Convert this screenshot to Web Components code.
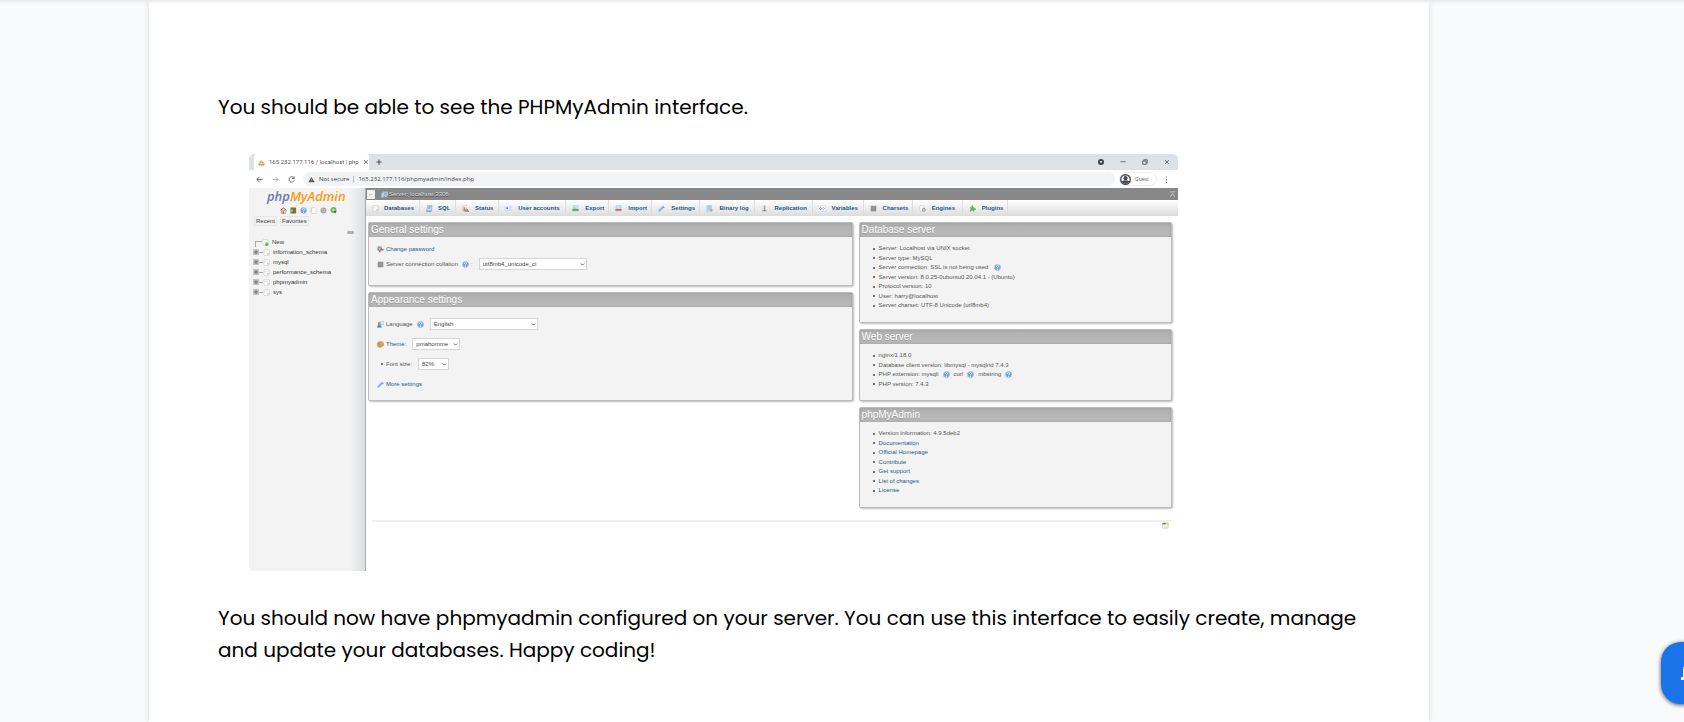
<!DOCTYPE html>
<html lang="en">
<head>
<meta charset="utf-8">
<title>Install phpMyAdmin</title>
<style>
body{margin:0;background:#f8fafc;color:#000;font-family:Poppins,Inter,sans-serif;overflow-x:hidden}
</style>
</head>
<body>
<article-page></article-page>
<notify-button></notify-button>
<script>
const define = (name, html) => {
  const t = document.createElement('template');
  t.innerHTML = html;
  customElements.define(name, class extends HTMLElement {
    constructor() {
      super();
      this.attachShadow({mode: 'open'}).append(t.content.cloneNode(true));
    }
  });
};

/* Icons on a 16-unit grid */
const ICONS = {
  home: '<path d="M1 8 8 2l7 6" fill="none" stroke="#a33b26" stroke-width="2"/><path d="M3 8h10v7H3z" fill="#e9dcae" stroke="#8a7a50"/><path d="M6 10h3v5H6z" fill="#7c5a2a"/>',
  exit: '<path d="M1 1h9v14H1z" fill="#4c9440"/><path d="M6 2l8-1v14l-8-1z" fill="#9b6230"/><path d="M3 6h3v4H3z" fill="#ddd"/>',
  help: '<circle cx="8" cy="8" r="7" fill="#6f9fd8" stroke="#a9c7e8" stroke-width="2"/><path d="M5.500 6.500q0-3 2.500-3t2.500 2.300q0 1.500-2.500 2.800v1.500M8 11.500v2" fill="none" stroke="#fff" stroke-width="1.800"/>',
  doc: '<path d="M4 1h8l2 2v12H4z" fill="#fff" stroke="#bbb"/><path d="M1 3h3M1 7h3M1 11h3" stroke="#999"/>',
  gear: '<circle cx="8" cy="8" r="5" fill="#d5d5d5" stroke="#aaa" stroke-width="4"/><circle cx="8" cy="8" r="2" fill="#999"/>',
  reload: '<circle cx="8" cy="7" r="5" fill="#bce5ae" stroke="#6fb562" stroke-width="4"/><path d="M8 9h7l-3 6z" fill="#317d2d"/>',
  db: '<path d="M2 3c0-3 13-3 13 0v10c0 3-13 3-13 0z" fill="#fafafa" stroke="#b8b8b8"/><path d="M2 4c0 2 13 2 13 0" fill="none" stroke="#ccc"/><path d="M9 9h5v4H9z" fill="#d5d5d5"/>',
  newdb: '<path d="M2 3c0-3 12-3 12 0v10c0 3-12 3-12 0z" fill="#fafafa" stroke="#b8b8b8"/><path d="M11 8v8M7 12h8" stroke="#6cae58" stroke-width="4"/>',
  sql: '<path d="M4 1h10l-2 14H1z" fill="#cfe2f7" stroke="#5b8dcc"/><path d="M6 4h5M5 7h5M1 14h11" stroke="#5b8dcc" stroke-width="2"/>',
  status: '<path d="M1 1h9v12H1z" fill="#eee" stroke="#bbb"/><path d="M5 14V5M9 14V8" stroke="#b87878" stroke-width="3"/><path d="M7 14h9M12 14V9" stroke="#888" stroke-width="3"/>',
  users: '<path d="M1 3h14v9H1z" fill="#eef3fa" stroke="#b8c6d8"/><path d="M3 5h4v4H3z" fill="#6487b7"/><path d="M9 6h4M9 9h4" stroke="#9ab"/>',
  export: '<path d="M2 1h12v13H2z" fill="#d5e4f2" stroke="#afc0d0"/><path d="M1 9h14v4H1z" fill="#5f9a58"/><path d="M3 7h8" stroke="#8fbf87" stroke-width="2"/>',
  import: '<path d="M2 1h12v13H2z" fill="#c9dcf2" stroke="#afc0d0"/><path d="M1 9h14v4H1z" fill="#e2606b"/>',
  wrench: '<path d="M3 13 10 6" stroke="#93b6e9" stroke-width="5" stroke-linecap="round"/><path d="m9 7 2-2V1l3 3 2 2-4 1-2 2z" fill="#8f9db8"/>',
  log: '<path d="M2 1h11v13H2z" fill="#cbdff1" stroke="#a6b5c7"/><path d="M4 4h7M4 7h7M4 10h7" stroke="#8399b2"/><circle cx="12" cy="12" r="3" fill="#aaa"/>',
  repl: '<path d="M6 1h4v9H6z" fill="#aaa"/><path d="M3 13h10" stroke="#999" stroke-width="3"/><path d="M8 10v4" stroke="#777" stroke-width="2"/>',
  vars: '<path d="M4 1h8l3 3v11H4z" fill="#fff" stroke="#ccc"/><path d="M4 5 1 8l3 3M9 5l3 3-3 3" fill="none" stroke="#4c90e0" stroke-width="2"/><circle cx="6.500" cy="8" r="1.500" fill="#4c90e0"/>',
  chars: '<path d="M2 2h12v12H2z" fill="#888" stroke="#aaa"/><path d="M4 5h8M4 8h8M4 11h8" stroke="#aaa"/>',
  engine: '<path d="M1 3c0-3 11-3 11 0v9c0 3-11 3-11 0z" fill="#f5f5f5" stroke="#bbb"/><circle cx="11" cy="11" r="3.500" fill="#ccc" stroke="#999" stroke-width="2"/>',
  plugin: '<path d="M2 5h4q-2-4 1.500-4T9 5h3v3q4-2 4 1t-4 2v4H9q0-3-2-3t-2 3H2v-4q2 0 2-2T2 8z" fill="#5fb75a"/>',
  key: '<circle cx="6" cy="6" r="4" fill="#ccc" stroke="#8d8496" stroke-width="3"/><path d="M5 10v5h3v-4z" fill="#777"/><path d="M8 7h7v3H8z" fill="#c9645a"/>',
  lang: '<path d="M7 1h9v7H9L7 11z" fill="#dfedfb" stroke="#6da1d7"/><circle cx="5" cy="6" r="3" fill="#b17b45"/><path d="M0 15q0-6 5-6t6 6z" fill="#3a79c4"/>',
  theme: '<path d="M8 1c10 0 9 11 4 11-3 0-1 3-4 3C-3 15-2 1 8 1z" fill="#dc9b5e" stroke="#b8804d"/><circle cx="5" cy="6" r="2" fill="#e07050"/><circle cx="11" cy="5" r="2" fill="#c9b3a0"/><circle cx="5" cy="11" r="1.500" fill="#a0a060"/>',
  win: '<path d="M1 2h13v12H1z" fill="#f4f4ec" stroke="#aaa"/><path d="M1 2h8v3H1z" fill="#4f739f"/><path d="M10 1h5v5h-5z" fill="#f1e438"/>',
  server: '<path d="M5 2h10v8H5z" fill="#87b7e8" stroke="#dce8f4"/><path d="M1 4h5v11H1z" fill="#c7d2dc"/><path d="M8 13h6" stroke="#c7d2dc" stroke-width="2"/>',
  boat: '<path d="M2 9 8 1v8zM9 9V4l5 5z" fill="#f59c32"/><path d="M0 10h16l-2 5H2z" fill="#e0945a"/>',
  close: '<path d="m3 3 10 10M13 3 3 13" stroke="#444" stroke-width="2"/>',
  plus: '<path d="M8 1v14M1 8h14" stroke="#555" stroke-width="3"/>',
  back: '<path d="M15 8H2M8 2 2 8l6 6" fill="none" stroke="#555" stroke-width="2"/>',
  fwd: '<path d="M1 8h13M8 2l6 6-6 6" fill="none" stroke="#aaa" stroke-width="2"/>',
  refresh: '<path d="M13 4a6 6 0 1 0 1 6M14 1v5H9" fill="none" stroke="#555" stroke-width="2"/>',
  warn: '<path d="M8 2 15 14H1z" fill="#555"/><path d="M8 6v4M8 11v2" stroke="#ddd" stroke-width="1"/>',
  drop: '<circle cx="8" cy="8" r="8" fill="#3c4043"/><path d="M4 6h8l-4 5z" fill="#fff"/>',
  min: '<path d="M1 7h14" stroke="#555" stroke-width="2"/>',
  max: '<path d="M2 5h9v9H2zM5 4V2h9v9h-2" fill="none" stroke="#444" stroke-width="2"/>',
  user: '<circle cx="8" cy="8" r="7" fill="#fff" stroke="#484b50" stroke-width="2"/><circle cx="8" cy="6" r="3" fill="#484b50"/><path d="M2 11q6-4 12 0-6 7-12 0z" fill="#484b50"/>',
  dots: '<path d="M7 1h2v3H7zM7 7h2v3H7zM7 13h2v3H7z" fill="#666"/>',
  up: '<path d="M2 2h12M3 13l5-7 5 7" fill="none" stroke="#ccc" stroke-width="2"/>',
  chevron: '<path d="m3 5 5 5 5-5" fill="none" stroke="#555" stroke-width="3"/>',
  expand: '<path d="M1 1h14v14H1z" fill="#bbb" stroke="#aaa"/><path d="M8 3v10M3 8h10" stroke="#777" stroke-width="3"/>',
  link: '<path d="M1 5h14v6H1z" fill="#999"/><path d="M4 8h8" stroke="#ddd" stroke-width="1"/>'
};
customElements.define('ui-icon', class extends HTMLElement {
  constructor() {
    super();
    this.attachShadow({mode: 'open'});
  }
  connectedCallback() {
    this.shadowRoot.innerHTML = `<style>:host{display:inline-block;flex:none;width:var(--icon,7px);height:var(--icon,7px)}svg{display:block;width:100%;height:100%}</style><svg viewBox="0 0 16 16" aria-hidden="true">${ICONS[this.getAttribute('name')]}</svg>`;
  }
});

/* Labelled drop-down: label, optional help icon, select */
customElements.define('pma-field', class extends HTMLElement {
  constructor() {
    super();
    this.attachShadow({mode: 'open'});
  }
  connectedCallback() {
    const a = n => this.getAttribute(n) || '';
    this.shadowRoot.innerHTML = `<style>
      :host{display:flex;align-items:center;height:12px}
      label{display:flex;align-items:center;gap:2px;color:var(--label,#555)}
      .box{display:grid;align-items:center;margin-left:6px;width:var(--w)}
      .box>*{grid-area:1/1}
      select{appearance:none;box-sizing:border-box;width:100%;height:12px;margin:0;padding:0 3px;border:1px solid #d5d5d5;border-radius:0;background:#fff;color:#444;font:inherit;line-height:10px}
      ui-icon{margin-left:2px}
      ui-icon[name=chevron]{--icon:5px;justify-self:end;margin-right:2px;pointer-events:none}
      </style>
      <label for="s"><slot></slot>${a('label')}${this.hasAttribute('help') ? '<ui-icon name="help"></ui-icon>' : ''}${a('after')}</label>
      <span class="box"><select id="s"><option>${a('value')}</option></select><ui-icon name="chevron"></ui-icon></span>`;
  }
});

define('pma-panel', `<style>
  :host{display:block;background:#f3f3f3;border:1px solid #bbb;border-radius:2px;box-shadow:1px 1px 2px #bbb}
  h2{margin:0;padding:0 2px;height:14px;line-height:14px;font-size:10px;font-weight:400;color:#fff;text-shadow:0 1px 0 #999;background:linear-gradient(#b0b0b0,#bbb);box-shadow:inset 0 0 3px #999}
  </style><h2><slot name="title"></slot></h2><slot></slot>`);

define('browser-bar', `<style>
  :host{display:block;background:#fff;color:#555;font:6px/12px "Open Sans",sans-serif}
  .strip{display:flex;align-items:center;height:16px;background:#dee1e6;padding-right:8px}
  .tab{display:flex;align-items:center;gap:4px;box-sizing:border-box;width:115px;height:16px;margin-left:5px;padding:0 4px;background:#fff;border-radius:3px 3px 0 0;font-family:Roboto,sans-serif}
  .tab span{flex:1;white-space:nowrap}
  button{display:flex;padding:0;border:0;background:none}
  .strip>button{--icon:6px}
  .new{margin:0 auto 0 7px}
  .win{margin-left:16px}
  .bar{display:flex;align-items:center;gap:9px;height:18px;padding:0 8px 0 7px}
  .url{display:flex;flex:1;align-items:center;gap:4px;height:14px;padding:0 5px;margin-left:-1px;border-radius:7px;background:#f1f3f4;color:#444}
  .url i{width:1px;height:7px;background:#bbb}
  .guest{display:flex;align-items:center;gap:4px;box-sizing:border-box;width:38px;height:14px;margin:0 -3px 0 -5px;border:1px solid #eee;border-radius:7px;font:5px "Open Sans",sans-serif;color:#555;--icon:11px}
  .close{--icon:6px}
  </style>
  <div class="strip"><div class="tab"><ui-icon name="boat"></ui-icon><span>165.232.177.116 / localhost | php</span><button class="close" aria-label="Close tab"><ui-icon name="close"></ui-icon></button></div>
  <button class="new" aria-label="New tab"><ui-icon name="plus"></ui-icon></button>
  <button class="win" aria-label="Search tabs"><ui-icon name="drop"></ui-icon></button><button class="win" aria-label="Minimize"><ui-icon name="min"></ui-icon></button><button class="win" aria-label="Maximize"><ui-icon name="max"></ui-icon></button><button class="win" aria-label="Close"><ui-icon name="close"></ui-icon></button></div>
  <div class="bar"><button aria-label="Back"><ui-icon name="back"></ui-icon></button><button aria-label="Forward"><ui-icon name="fwd"></ui-icon></button><button aria-label="Reload"><ui-icon name="refresh"></ui-icon></button>
  <div class="url"><ui-icon name="warn"></ui-icon><span>Not secure</span><i></i><span>165.232.177.116/phpmyadmin/index.php</span></div>
  <button class="guest"><ui-icon name="user"></ui-icon>Guest</button><button aria-label="Menu"><ui-icon name="dots"></ui-icon></button></div>`);

define('pma-nav', `<style>
  :host{display:block;box-sizing:border-box;background:linear-gradient(90deg,#f3f3f3 87%,#dcdfe1);border-right:1px solid #aaa;color:#333}
  .logo{margin:0 0 0 18px;font:italic 600 13px/16px "Open Sans",sans-serif;color:#f89c0e}
  .logo b{font-weight:600;color:#6c78af}
  .icons{display:flex;gap:3px;margin:3px 0 0 31px}
  .quick{display:flex;gap:3px;margin:2px 0 0 5px}
  button{padding:0 1px;border:1px solid #e6e6e6;border-radius:1px;background:#f2f2f2;color:#444;font:inherit;line-height:8px}
  .link{display:flex;justify-content:end;padding:3px 11px 0 0}
  ul{list-style:none;margin:1px 0 0;padding:0 0 0 4px}
  li{display:flex;align-items:center;height:10px;gap:3px}
  li ui-icon[name=expand]{--icon:6px}
  li i{width:4px;height:1px;margin:0 -3px;background:#aaa}
  .first i{width:6px;height:5px;align-self:end;margin:0 -3px 0 2px;border:solid #aaa;border-width:1px 0 0 1px;background:none}
  a{color:inherit;text-decoration:none}
  </style>
  <p class="logo"><b>php</b>MyAdmin</p>
  <div class="icons"><ui-icon name="home"></ui-icon><ui-icon name="exit"></ui-icon><ui-icon name="help"></ui-icon><ui-icon name="doc"></ui-icon><ui-icon name="gear"></ui-icon><ui-icon name="reload"></ui-icon></div>
  <div class="quick"><button>Recent</button><button>Favorites</button></div>
  <div class="link"><ui-icon name="link"></ui-icon></div>
  <ul><li class="first"><i></i><ui-icon name="newdb"></ui-icon><a href="#">New</a></li>
  ${['information_schema','mysql','performance_schema','phpmyadmin','sys'].map(n => `<li><ui-icon name="expand"></ui-icon><i></i><ui-icon name="db"></ui-icon><a href="#">${n}</a></li>`).join('')}</ul>`);

define('pma-topbar', `<style>
  :host{display:block}
  .server{display:flex;align-items:center;height:12px;padding-right:2px;background:#888;color:#ddd;--icon:7px}
  .server button{width:8px;height:9px;margin:0 6px 0 1px;padding:0;border:0;background:#f3f3f3;color:#666;font:inherit;line-height:9px}
  .server a{display:flex;align-items:center;gap:1px;margin-right:auto;color:inherit;text-shadow:0 1px 0 #444;text-decoration:none}
  nav{display:grid;grid-template-columns:54fr 36fr 43fr 67fr 43fr 43fr 48fr 55fr 57fr 51fr 49fr 50fr 45fr 170fr;height:16px;background:linear-gradient(#fff,#dcdcdc)}
  nav a{display:flex;align-items:center;gap:5px;padding-left:6px;border-right:1px solid #ddd;color:#235a81;font-weight:700;text-decoration:none;white-space:nowrap}
  nav a:nth-child(n+3){gap:6px}
  </style>
  <div class="server"><button aria-label="Hide panel">←</button><a href="#"><ui-icon name="server"></ui-icon>Server: localhost:3306</a><ui-icon name="up"></ui-icon></div>
  <nav>${[['db','Databases'],['sql','SQL'],['status','Status'],['users','User accounts'],['export','Export'],['import','Import'],['wrench','Settings'],['log','Binary log'],['repl','Replication'],['vars','Variables'],['chars','Charsets'],['engine','Engines'],['plugin','Plugins']].map(([i, t]) => `<a href="#"><ui-icon name="${i}"></ui-icon>${t}</a>`).join('')}</nav>`);

define('pma-window', `<style>
  :host{display:block;overflow:hidden;border-radius:5px;background:#fff;color:#555;font:6px/9px "Liberation Sans",Arial,sans-serif}
  .body{display:grid;grid-template-columns:117px 1fr;min-height:383px}
  .cols{display:grid;grid-template-columns:484fr 313fr;gap:6px;align-items:start;padding:6px 6px 0 2px}
  .col{display:grid;gap:6px}
  .rows{display:grid;gap:3px;padding:6px 8px 15px}
  .rows.wide{gap:8px;padding:11px 8px 10px}
  .act{display:flex;align-items:center;gap:2px;height:12px}
  a{color:#235a81;text-decoration:none}
  ul{display:flex;flex-direction:column;justify-content:space-between;min-height:66px;margin:0;padding:7px 0 12px 13px;list-style:none}
  ul.short{min-height:38px;padding-bottom:11px}
  li{display:flex;align-items:center;gap:4px;height:9px;white-space:pre}
  li::before,.dot::before{content:"";flex:none;width:2px;height:2px;border-radius:1px;background:#444}
  .dot{padding:0 1px 0 4px}
  .theme{--label:#235a81}
  hr{height:2px;margin:12px 6px 0;border:0;background:#f0f0f0}
  .foot{display:flex;justify-content:end;padding-right:9px}
  </style>
  <browser-bar></browser-bar>
  <div class="body"><pma-nav></pma-nav><main><pma-topbar></pma-topbar>
  <div class="cols"><div class="col">
    <pma-panel><span slot="title">General settings</span><div class="rows">
      <div class="act"><ui-icon name="key"></ui-icon><a href="#">Change password</a></div>
      <pma-field style="--w:108px" label="Server connection collation" help after=":" value="utf8mb4_unicode_ci"><ui-icon name="chars"></ui-icon></pma-field></div></pma-panel>
    <pma-panel><span slot="title">Appearance settings</span><div class="rows wide">
      <pma-field style="--w:108px" label="Language" help value="English"><ui-icon name="lang"></ui-icon></pma-field>
      <pma-field class="theme" style="--w:48px" label="Theme:" value="pmahomme"><ui-icon name="theme"></ui-icon></pma-field>
      <pma-field style="--w:31px" label="Font size:" value="82%"><span class="dot" style="display:flex"></span></pma-field>
      <div class="act"><ui-icon name="wrench"></ui-icon><a href="#">More settings</a></div></div></pma-panel>
  </div><div class="col">
    <pma-panel><span slot="title">Database server</span><ul><li>Server: Localhost via UNIX socket</li><li>Server type: MySQL</li><li>Server connection: SSL is not being used <ui-icon name="help"></ui-icon></li><li>Server version: 8.0.25-0ubuntu0.20.04.1 - (Ubuntu)</li><li>Protocol version: 10</li><li>User: harry@localhost</li><li>Server charset: UTF-8 Unicode (utf8mb4)</li></ul></pma-panel>
    <pma-panel><span slot="title">Web server</span><ul class="short"><li>nginx/1.18.0</li><li>Database client version: libmysql - mysqlnd 7.4.3</li><li>PHP extension: mysqli<ui-icon name="help"></ui-icon>curl<ui-icon name="help"></ui-icon>mbstring<ui-icon name="help"></ui-icon></li><li>PHP version: 7.4.3</li></ul></pma-panel>
    <pma-panel><span slot="title">phpMyAdmin</span><ul><li>Version information: 4.9.5deb2</li>${['Documentation','Official Homepage','Contribute','Get support','List of changes','License'].map(t => `<li><a href="#">${t}</a></li>`).join('')}</ul></pma-panel>
  </div></div><hr><div class="foot"><ui-icon name="win"></ui-icon></div></main></div>`);

define('article-page', `<style>
  :host{display:block;padding:0 255px 0 149px}
  article{box-sizing:border-box;min-height:100vh;padding:91px 69px 32px;background:#fff;box-shadow:0 0 5px #ddd}
  .edge{position:fixed;inset:0 0 auto;height:4px;background:linear-gradient(#e8e8e8,transparent)}
  p{margin:0;font-size:20px;line-height:32px}
  figure{max-width:929px;margin:31px 31px}
  </style>
  <article><p>You should be able to see the PHPMyAdmin interface.</p>
  <figure><pma-window></pma-window></figure>
  <p>You should now have phpmyadmin configured on your server. You can use this interface to easily create, manage and update your databases. Happy coding!</p></article><div class="edge"></div>`);

define('notify-button', `<style>
  :host{position:fixed;right:-39px;bottom:18px}
  button{display:grid;place-items:center;width:62px;height:62px;padding:0;border:0;border-radius:20px;background:#1a73e8;box-shadow:0 1px 4px #555}
  svg{width:24px;height:24px}
  </style><button aria-label="Notifications"><svg viewBox="0 0 24 24" fill="#fff"><path d="M1 16h22v3H1zM3 16V9a9 9 0 0 1 18 0v7zM10 20h4v2h-4z"/></svg></button>`);
</script>
</body>
</html>
